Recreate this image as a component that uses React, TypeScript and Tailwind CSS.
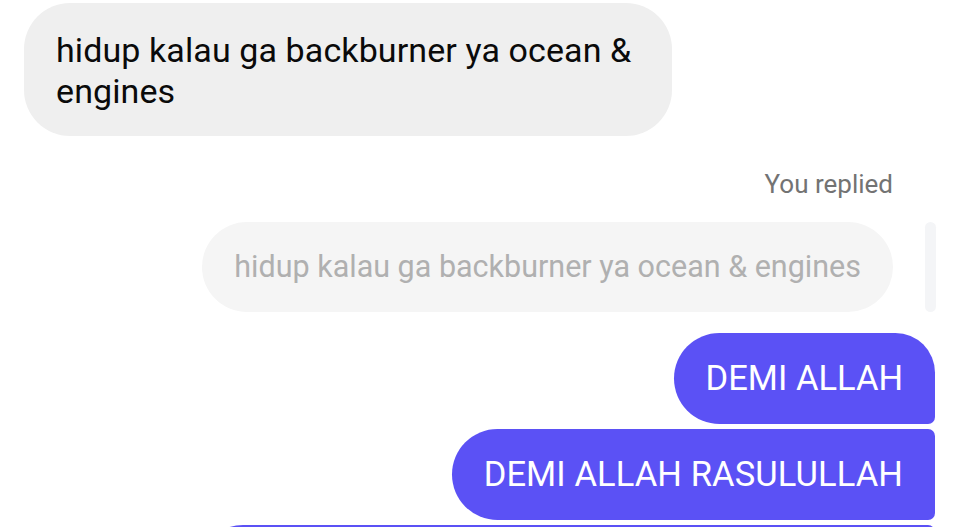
import React from "react";

export default function App() {
  const font = { fontFamily: "Roboto, 'Noto Sans', sans-serif" };
  return (
    <div className="w-[957px] h-[527px] overflow-hidden bg-white" style={font}>
      <div className="pt-[3px] pl-[24px]">
        <div className="w-[648px] rounded-[46px] bg-[#efefef] pl-[32px] pr-[20px] pt-[27px] pb-[24px] text-[34px] leading-[41px] tracking-[0.1px] text-[#0a0a0a]">
          hidup kalau ga backburner ya ocean &amp; engines
        </div>
      </div>
      <div className="flex flex-col items-end pr-[21px]">
        <div className="mt-[32px] mr-[43px] text-[26px] leading-[32px] text-[#737373]">You replied</div>
        <div className="mt-[22px] flex items-stretch gap-[32px]">
          <div className="h-[90px] flex items-center rounded-full bg-[#f5f5f5] px-[32px] text-[30.5px] text-[#b0b0b0] whitespace-nowrap">
            hidup kalau ga backburner ya ocean &amp; engines
          </div>
          <div className="w-[11px] rounded-full bg-[#f4f5f7]" />
        </div>
        <div className="mt-[21px] mr-[1px] flex flex-col items-end gap-[5px]">
          <div className="h-[91px] flex items-center rounded-tl-[46px] rounded-bl-[46px] rounded-tr-[40px] rounded-br-[7px] bg-[#5b51f5] px-[32px] text-[34.5px] text-white whitespace-nowrap">
            DEMI ALLAH
          </div>
          <div className="h-[91px] flex items-center rounded-tl-[46px] rounded-bl-[46px] rounded-tr-[7px] rounded-br-[7px] bg-[#5b51f5] px-[32px] text-[34.5px] tracking-[0.1px] text-white whitespace-nowrap">
            DEMI ALLAH RASULULLAH
          </div>
          <div className="h-[91px] w-[738px] rounded-tl-[46px] rounded-tr-[7px] bg-[#5b51f5]" />
        </div>
      </div>
    </div>
  );
}
